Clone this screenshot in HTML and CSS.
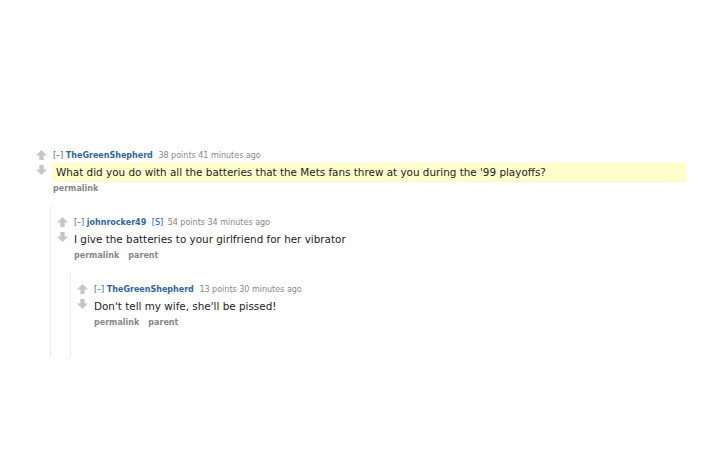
FILE: index.html
```html
<!DOCTYPE html>
<html lang="en">
<head>
  <meta charset="UTF-8">
  <title>Comments</title>
  <link rel="stylesheet" href="styles.css">
</head>
<body>
  <div class="commentarea">
    <div class="comment">
      <div class="midcol">
        <span class="arrow up"></span>
        <span class="arrow down"></span>
      </div>
      <div class="entry">
        <p class="tagline"><span class="expand">[–]</span> <a class="author" href="#">TheGreenShepherd</a> <span class="score">38 points</span> <span class="time">41 minutes ago</span></p>
        <div class="md highlighted">What did you do with all the batteries that the Mets fans threw at you during the '99 playoffs?</div>
        <ul class="buttons"><li><a href="#">permalink</a></li></ul>
      </div>
    </div>

    <div class="child">
      <div class="comment">
        <div class="midcol">
          <span class="arrow up"></span>
          <span class="arrow down"></span>
        </div>
        <div class="entry">
          <p class="tagline"><span class="expand">[–]</span> <a class="author" href="#">johnrocker49</a> <span class="submitter">[S]</span> <span class="score">54 points</span> <span class="time">34 minutes ago</span></p>
          <div class="md">I give the batteries to your girlfriend for her vibrator</div>
          <ul class="buttons"><li><a href="#">permalink</a></li><li><a href="#">parent</a></li></ul>
        </div>
      </div>

      <div class="child">
        <div class="comment">
          <div class="midcol">
            <span class="arrow up"></span>
            <span class="arrow down"></span>
          </div>
          <div class="entry">
            <p class="tagline"><span class="expand">[–]</span> <a class="author" href="#">TheGreenShepherd</a> <span class="score">13 points</span> <span class="time">30 minutes ago</span></p>
            <div class="md">Don't tell my wife, she'll be pissed!</div>
            <ul class="buttons"><li><a href="#">permalink</a></li><li><a href="#">parent</a></li></ul>
          </div>
        </div>
      </div>
    </div>
  </div>
</body>
</html>
```

FILE: styles.css
```css
body {
  margin: 0;
  background: #fff;
  font-family: "DejaVu Sans", Verdana, sans-serif;
  color: #222;
}
.commentarea {
  padding: 150px 24px 0 36px;
}
.comment {
  display: flex;
}
.midcol {
  width: 11px;
  display: flex;
  flex-direction: column;
  gap: 5px;
  margin-right: 6px;
}
.arrow {
  display: block;
  width: 11px;
  height: 10px;
  background: #c6c6c6;
}
.arrow.up {
  clip-path: polygon(50% 0, 100% 55%, 70% 55%, 70% 100%, 30% 100%, 30% 55%, 0 55%);
}
.arrow.down {
  clip-path: polygon(30% 0, 70% 0, 70% 45%, 100% 45%, 50% 100%, 0 45%, 30% 45%);
}
.entry {
  flex: 1;
}
.tagline {
  margin: 0;
  font-size: 8px;
  line-height: 11px;
  color: #888;
}
.tagline a {
  text-decoration: none;
}
.author {
  color: #369;
  font-weight: bold;
  margin-right: 3px;
}
.expand {
  color: #369;
}
.submitter {
  color: #0055df;
  margin-right: 2px;
}
.md {
  font-size: 10.4px;
  line-height: 13px;
  padding: 3px 0;
  margin: 2px 0 1px 0;
}
.highlighted {
  background: #ffffcc;
  padding-left: 4px;
  margin-left: -1px;
}
.buttons {
  list-style: none;
  margin: 0;
  padding: 0;
  display: flex;
  gap: 9px;
  font-size: 8px;
  line-height: 11px;
}
.buttons a {
  font-weight: bold;
  color: #888;
  text-decoration: none;
}
.child {
  margin: 12px 0 0 14px;
  padding: 11px 0 0 6px;
  border-left: 1px solid #eee;
}
.child .child {
  margin-left: 13px;
  padding-bottom: 30px;
}
```
